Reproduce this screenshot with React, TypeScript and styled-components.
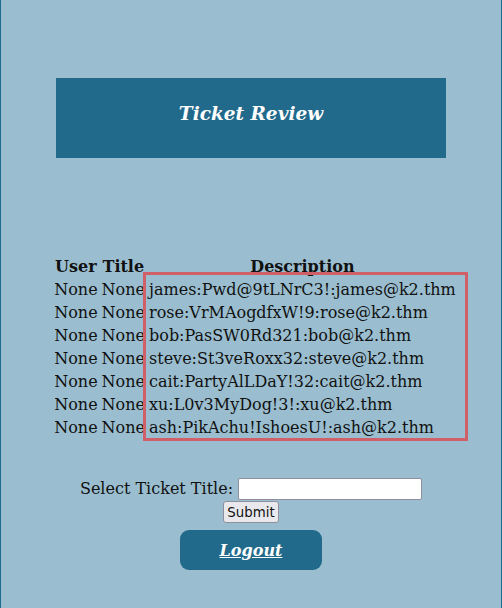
import styled, { createGlobalStyle } from 'styled-components';

const GlobalStyle = createGlobalStyle`
  html, body {
    margin: 0;
    padding: 0;
    background: #9abecf;
  }

  body {
    font-family: "DejaVu Serif", serif;
    font-size: 16px;
    color: #111;
  }
`;

const Page = styled.div`
  box-sizing: border-box;
  min-height: 100vh;
  border-left: 1px solid #1f6a8f;
  border-right: 1px solid #1f6a8f;
  padding-top: 78px;
  display: flex;
  flex-direction: column;
  align-items: center;
`;

const Banner = styled.div`
  width: 390px;
  height: 80px;
  background: #226a8c;
  display: flex;
  align-items: center;
  justify-content: center;

  h1 {
    margin: 0 0 9px;
    color: #fff;
    font-size: 18.5px;
    font-style: italic;
    font-weight: bold;
  }
`;

const TableBox = styled.div`
  position: relative;
  margin-top: 96px;
  margin-left: 8px;
`;

// red annotation frame drawn over the description column
const Highlight = styled.div`
  position: absolute;
  left: 92px;
  top: 18px;
  width: 319px;
  height: 163px;
  border: 3px solid #d05f67;
  pointer-events: none;
`;

const TicketTable = styled.table`
  font-size: 16px;

  th {
    font-weight: bold;
  }
`;

const TicketForm = styled.form`
  width: 390px;
  margin-top: 38px;
  text-align: center;
  font-size: 16px;

  input[type='text'] {
    width: 184px;
    height: 22px;
    box-sizing: border-box;
    margin-left: 5px;
    border: 1px solid #8f8f9d;
    border-radius: 2px;
    background: #fff;
    vertical-align: middle;
  }
`;

const SubmitButton = styled.button`
  box-sizing: border-box;
  height: 22px;
  font-family: "DejaVu Sans", sans-serif;
  font-size: 13.33px;
  padding: 0 3px;
  margin-top: 1px;
  background: #e9e9ed;
  border: 1px solid #8f8f9d;
  border-radius: 3px;
  color: #111;
`;

const LogoutLink = styled.a`
  margin-top: 7px;
  width: 142px;
  height: 40px;
  border-radius: 9px;
  background: #226a8c;
  display: flex;
  align-items: center;
  justify-content: center;
  color: #fff;
  font-size: 16px;
  font-weight: bold;
  font-style: italic;
  text-decoration: underline;
`;

const tickets = [
  'james:Pwd@9tLNrC3!:james@k2.thm',
  'rose:VrMAogdfxW!9:rose@k2.thm',
  'bob:PasSW0Rd321:bob@k2.thm',
  'steve:St3veRoxx32:steve@k2.thm',
  'cait:PartyAlLDaY!32:cait@k2.thm',
  'xu:L0v3MyDog!3!:xu@k2.thm',
  'ash:PikAchu!IshoesU!:ash@k2.thm',
];

const App: React.FC = () => {
  return (
    <>
      <GlobalStyle />
      <Page>
        <Banner>
          <h1>Ticket Review</h1>
        </Banner>

        <TableBox>
          <TicketTable>
            <thead>
              <tr>
                <th>User</th>
                <th>Title</th>
                <th>Description</th>
              </tr>
            </thead>
            <tbody>
              {tickets.map((desc) => (
                <tr key={desc}>
                  <td>None</td>
                  <td>None</td>
                  <td>{desc}</td>
                </tr>
              ))}
            </tbody>
          </TicketTable>
          <Highlight />
        </TableBox>

        <TicketForm onSubmit={(e) => e.preventDefault()}>
          Select Ticket Title:
          <input type="text" name="title" />
          <br />
          <SubmitButton type="submit">Submit</SubmitButton>
        </TicketForm>

        <LogoutLink href="#">Logout</LogoutLink>
      </Page>
    </>
  );
};

export default App;
